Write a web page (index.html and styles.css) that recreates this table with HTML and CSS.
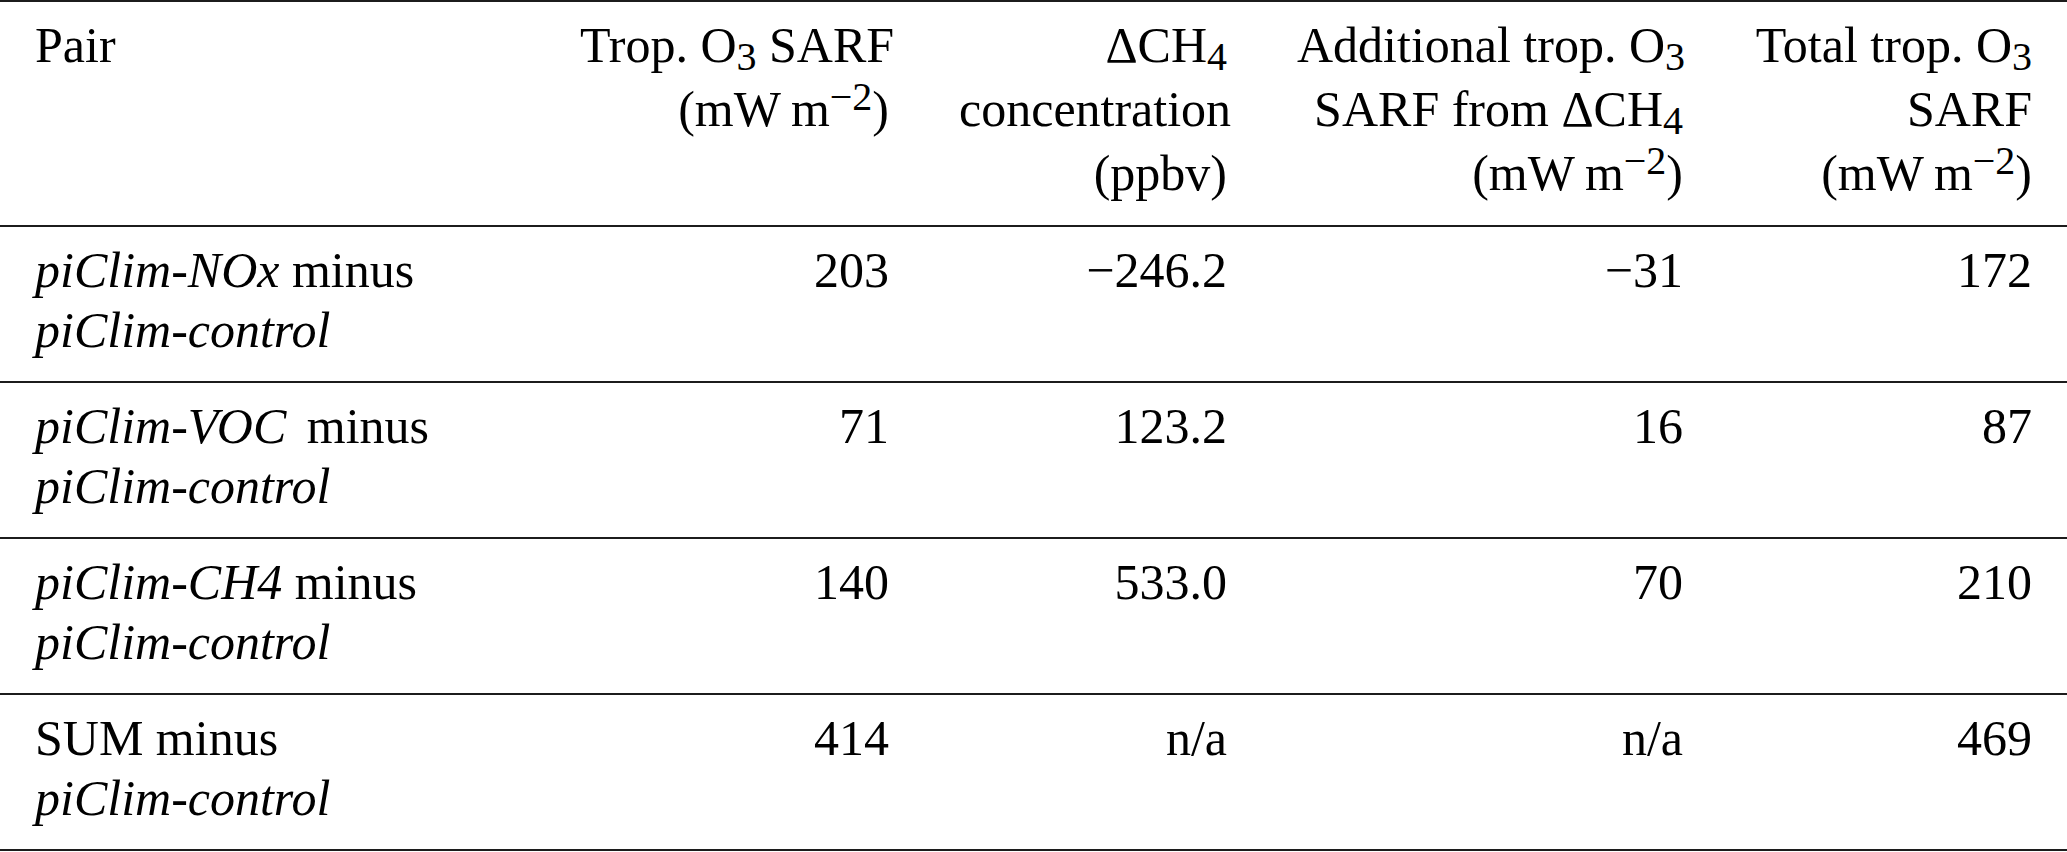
FILE: index.html
```html
<!DOCTYPE html>
<html lang="en">
<head>
<meta charset="utf-8">
<title>Tropospheric ozone SARF pairs</title>
<link rel="stylesheet" href="styles.css">
</head>
<body>
<table class="sarf">
  <colgroup>
    <col class="c-pair">
    <col class="c-trop">
    <col class="c-dch4">
    <col class="c-add">
    <col class="c-total">
  </colgroup>
  <thead>
    <tr>
      <th class="pair">Pair</th>
      <th>Trop. O<sub>3</sub> SARF<br>(mW&#8201;m<sup>−2</sup>)</th>
      <th>ΔCH<sub>4</sub><br>concentration<br>(ppbv)</th>
      <th>Additional trop. O<sub>3</sub><br>SARF from ΔCH<sub>4</sub><br>(mW&#8201;m<sup>−2</sup>)</th>
      <th>Total trop. O<sub>3</sub><br>SARF<br>(mW&#8201;m<sup>−2</sup>)</th>
    </tr>
  </thead>
  <tbody>
    <tr>
      <td class="pair"><i>piClim-NOx</i> minus<br><i>piClim-control</i></td>
      <td>203</td>
      <td>−246.2</td>
      <td>−31</td>
      <td>172</td>
    </tr>
    <tr>
      <td class="pair"><i class="wide">piClim-VOC</i> minus<br><i>piClim-control</i></td>
      <td>71</td>
      <td>123.2</td>
      <td>16</td>
      <td>87</td>
    </tr>
    <tr>
      <td class="pair"><i>piClim-CH4</i> minus<br><i>piClim-control</i></td>
      <td>140</td>
      <td>533.0</td>
      <td>70</td>
      <td>210</td>
    </tr>
    <tr>
      <td class="pair">SUM minus<br><i>piClim-control</i></td>
      <td>414</td>
      <td>n/a</td>
      <td>n/a</td>
      <td>469</td>
    </tr>
  </tbody>
</table>
</body>
</html>
```

FILE: styles.css
```css
html, body {
  margin: 0;
  padding: 0;
  background: #ffffff;
}

.sarf {
  width: 2067px;
  table-layout: fixed;
  border-collapse: collapse;
  font-family: "Liberation Serif", "Times New Roman", serif;
  font-size: 50px;
  color: #000;
  border-top: 2px solid #1c1c1c;
}

.c-pair { width: 545px; }
.c-trop { width: 379px; }
.c-dch4 { width: 338px; }
.c-add { width: 456px; }
.c-total { width: 349px; }

.sarf th,
.sarf td {
  text-align: right;
  vertical-align: top;
  font-weight: normal;
  padding: 0 35px;
  white-space: nowrap;
}

.sarf th.pair,
.sarf td.pair {
  text-align: left;
}

.sarf thead tr {
  border-bottom: 2px solid #1c1c1c;
}

.sarf th {
  line-height: 64px;
  padding-top: 11px;
  padding-bottom: 20px;
}

.sarf tbody tr {
  border-bottom: 2px solid #1c1c1c;
}

.sarf td {
  line-height: 60px;
  padding-top: 13px;
  padding-bottom: 21px;
}

.sarf sub,
.sarf sup {
  font-size: 0.8em;
  line-height: 0;
}

.sarf sub {
  vertical-align: -0.2em;
}

.sarf sup {
  vertical-align: 0.4em;
}

.sarf i.wide {
  margin-right: 8px;
}
```
